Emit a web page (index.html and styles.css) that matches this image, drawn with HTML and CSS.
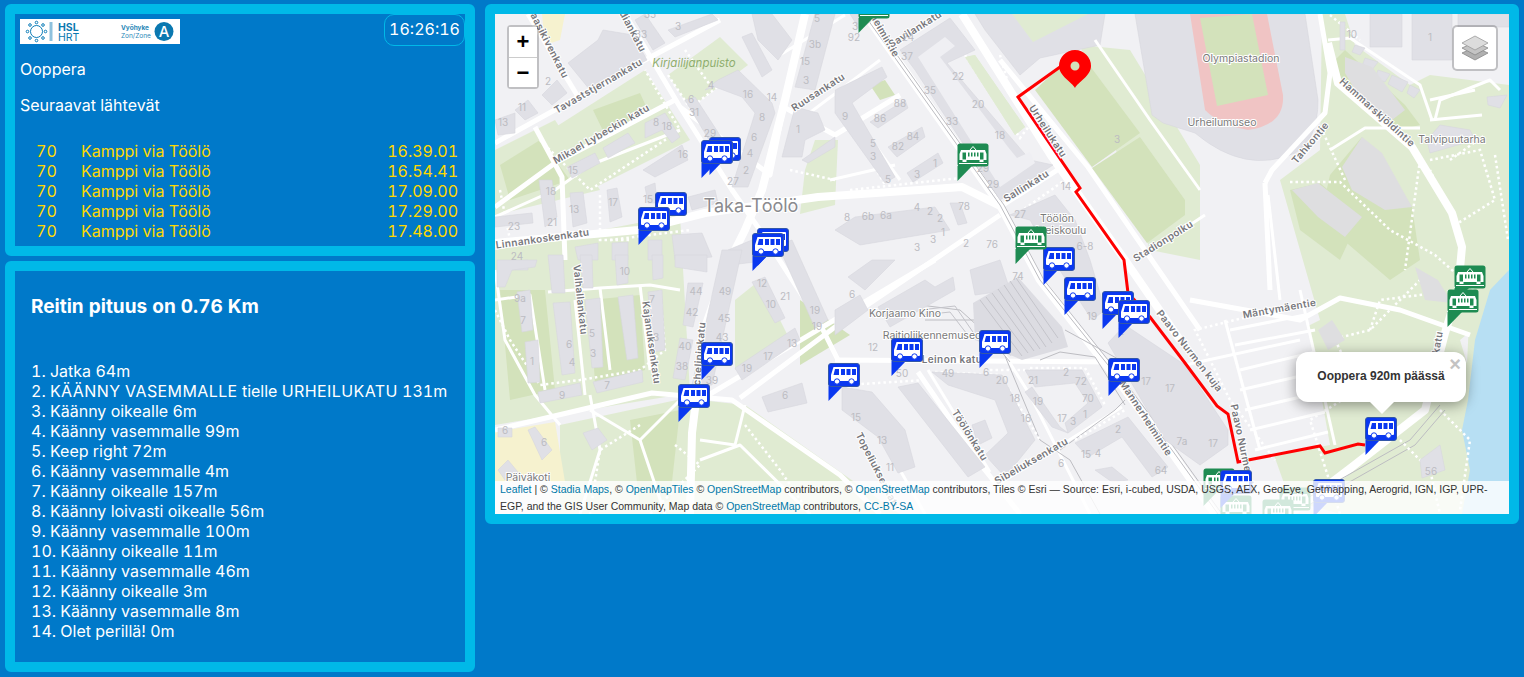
FILE: index.html
```html
<!DOCTYPE html>
<html lang="fi">
<head>
<meta charset="utf-8">
<title>Ooppera</title>
<link rel="stylesheet" href="styles.css">
</head>
<body>
<div class="page">
  <div class="left">
    <section class="panel stop">
      <div class="top">
        <svg class="logo" viewBox="0 0 160 25">
          <rect width="160" height="25" fill="#fff"/>
          <g fill="none" stroke="#0a7cb8" stroke-width="1">
            <circle cx="16.5" cy="12.5" r="6"/>
            <circle cx="16.5" cy="3.5" r="1.3"/><circle cx="16.5" cy="21.5" r="1.3"/>
            <circle cx="7.5" cy="12.5" r="1.3"/><circle cx="25.5" cy="12.5" r="1.3"/>
            <circle cx="10" cy="6" r="1.3"/><circle cx="23" cy="6" r="1.3"/>
            <circle cx="10" cy="19" r="1.3"/><circle cx="23" cy="19" r="1.3"/>
          </g>
          <rect x="29.500" y="3" width="3" height="19" fill="#8fc1dd"/>
          <text class="logo-b" x="38" y="12">HSL</text>
          <text class="logo-r" x="38" y="21.500">HRT</text>
          <text class="logo-s logo-sb" x="101" y="11">Vyöhyke</text>
          <text class="logo-s" x="101" y="18.500">Zon/Zone</text>
          <circle cx="144" cy="12.500" r="9.500" fill="#0a78b0"/>
          <text class="logo-a" x="144" y="18" text-anchor="middle">A</text>
        </svg>
        <div class="clock">16:26:16</div>
      </div>
      <p class="stop-name">Ooppera</p>
      <p class="next">Seuraavat lähtevät</p>
      <div class="deps">
        <div class="dep"><span>70</span><span>Kamppi via Töölö</span><span>16.39.01</span></div>
        <div class="dep"><span>70</span><span>Kamppi via Töölö</span><span>16.54.41</span></div>
        <div class="dep"><span>70</span><span>Kamppi via Töölö</span><span>17.09.00</span></div>
        <div class="dep"><span>70</span><span>Kamppi via Töölö</span><span>17.29.00</span></div>
        <div class="dep"><span>70</span><span>Kamppi via Töölö</span><span>17.48.00</span></div>
      </div>
    </section>
    <section class="panel route">
      <h2>Reitin pituus on 0.76 Km</h2>
      <ol class="steps">
        <li>1. Jatka 64m</li>
        <li>2. <span class="caps">KÄÄNNY VASEMMALLE</span> tielle <span class="caps">URHEILUKATU</span> 131m</li>
        <li>3. Käänny oikealle 6m</li>
        <li>4. Käänny vasemmalle 99m</li>
        <li>5. Keep right 72m</li>
        <li>6. Käänny vasemmalle 4m</li>
        <li>7. Käänny oikealle 157m</li>
        <li>8. Käänny loivasti oikealle 56m</li>
        <li>9. Käänny vasemmalle 100m</li>
        <li>10. Käänny oikealle 11m</li>
        <li>11. Käänny vasemmalle 46m</li>
        <li>12. Käänny oikealle 3m</li>
        <li>13. Käänny vasemmalle 8m</li>
        <li>14. Olet perillä! 0m</li>
      </ol>
    </section>
  </div>
  <section class="panel mapwrap">
    <div class="map">
      <svg class="tiles" viewBox="495 14 1014 500">
        <defs>
          <symbol id="bus" viewBox="0 0 32 38">
            <path class="m-blue" d="M.5 23H15L.5 38Z"/>
            <rect class="m-blue-box" x=".5" y=".5" width="31" height="23" rx="2.500"/>
            <path class="m-white" d="M5.500 4H28q1 0 1 1V17q0 1-1 1H4q-1 0-1-1V12Z"/>
            <path class="m-blue" d="M7 6h4v6H5.500ZM13 6h4v6h-4ZM18.500 6h4v6h-4ZM24 6h4v6h-4Z"/>
            <circle class="m-wheel" cx="9" cy="18.500" r="2.700"/>
            <circle class="m-wheel" cx="23.500" cy="18.500" r="2.700"/>
          </symbol>
          <symbol id="tram" viewBox="0 0 32 38">
            <path class="m-green" d="M.5 23H15L.5 38Z"/>
            <rect class="m-green" x=".5" y=".5" width="31" height="23" rx="2.500"/>
            <path class="m-line" d="M13 7 16 3.500 19 7"/>
            <path class="m-white" d="M4 7H28L29.500 11V17H26.500V19H22.500V17H9.500V19H5.500V17H2.500V11Z"/>
            <path class="m-green" d="M5.500 9.500h3.500v7H5.500ZM11 9.500h1.500v4H11ZM14 9.500h1.500v4H14ZM17 9.500h1.500v4H17ZM20 9.500h1.500v4H20ZM23 9.500h3.500v7H23Z"/>
            <rect class="m-white" x="2" y="20" width="28" height="1"/>
          </symbol>
        </defs>
        <rect class="bg" x="495" y="14" width="1014" height="500"/>

        <!-- parks -->
        <g class="park">
          <polygon points="495,250 680,215 690,393 495,425"/>
          <polygon points="495,150 555,120 600,190 495,215"/>
          <polygon points="540,137 645,70 690,140 590,190"/>
          <polygon points="668,75 720,37 748,65 690,108"/>
          <polygon points="800,214 835,205 838,140 815,140 805,170"/>
          <polygon points="560,425 700,395 700,514 560,514"/>
          <polygon points="700,400 745,405 900,514 700,514"/>
          <polygon points="735,300 760,280 790,340 735,370"/>
          <polygon points="1322,14 1509,14 1509,300 1460,340 1478,400 1460,514 1340,514 1290,500 1240,360 1320,320 1280,180 1320,150"/>
          <polygon points="1080,45 1130,50 1200,165 1200,260 1150,250"/>
          <polygon points="965,57 975,55 1025,127 1015,135"/>
          <polygon points="1012,14 1088,14 1033,42"/>
          <polygon points="1470,300 1509,270 1509,514 1460,514"/>
          <polygon points="1428,445 1465,440 1480,514 1420,514"/>
          <polygon points="542,14 565,14 560,40 545,45" class="sand"/>
          <polygon points="495,432 555,422 565,482 495,482" class="sand"/>
          <polygon points="1040,215 1060,205 1075,225 1050,235" class="sand"/>
        </g>
        <polygon class="bg" points="1345,14 1509,14 1509,85 1430,75 1410,85 1355,45"/>
        <polygon class="bg" points="1225,325 1305,305 1330,445 1240,462"/>
        <g class="park2">
          <polygon points="593,110 640,93 650,115 605,135"/>
          <polygon points="1035,90 1078,50 1140,133 1092,167"/>
          <polygon points="1092,168 1140,137 1185,200 1185,215 1147,243"/>
          <polygon points="870,85 885,80 895,95 880,100"/>
          <polygon points="1330,175 1362,137 1412,207 1420,260 1390,280 1320,220"/>
          <polygon points="1290,190 1320,183 1360,217 1340,260 1300,230"/>
          <polygon points="1335,60 1345,50 1405,105 1420,125 1400,130 1345,90"/>
          <polygon points="590,300 640,295 645,370 595,385"/>
          <polygon points="500,290 545,290 555,390 510,400"/>
          <polygon points="630,420 680,410 670,500 640,510"/>
          <polygon points="800,300 850,335 800,365"/>
          <polygon points="500,165 540,140 570,180 510,200"/>
        </g>

        <!-- water -->
        <path class="water" d="M1509 270 1490 290 1475 340 1468 400 1462 430 1470 470 1462 514H1509Z"/>

        <!-- stadium -->
        <polygon class="bld" points="975,14 1105,14 1100,45 1040,58 1020,75 985,30"/>
        <polygon class="park" points="1012,14 1088,14 1033,42"/>
        <path class="bld" d="M1135 14H1305L1318 100Q1318 140 1295 153 1245 175 1195 133L1163 123 1152 115Z"/>
        <path class="track" d="M1190 14H1267L1283 95Q1285 125 1248 130 1220 125 1205 110Z"/>
        <polygon class="park2" points="1200,18 1252,14 1268,95 1217,106"/>

        <!-- roads -->
        <g class="road r3">
          <polyline points="495,217 555,190 590,165 680,130"/>
          <polyline points="495,300 530,295 545,390"/>
          <polyline points="548,292 600,288 650,285 680,290"/>
          <polyline points="600,288 610,370"/>
          <polyline points="495,270 505,340 535,395 560,425"/>
          <polyline points="575,300 585,395"/>
          <polyline points="640,285 650,370"/>
          <polyline points="835,90 900,180"/>
          <polyline points="780,55 845,15"/>
          <polyline points="800,120 880,60"/>
          <polyline points="830,180 895,165"/>
          <polyline points="928,370 990,472"/>
          <polyline points="1005,355 1030,395 1090,514"/>
          <polyline points="1002,482 1122,407"/>
          <polyline points="838,370 900,470 925,514"/>
          <polyline points="1330,150 1365,128 1420,128"/>
          <polyline points="1435,120 1440,100 1490,80 1500,90"/>
          <polyline points="1430,120 1482,115"/>
          <polyline points="1430,100 1475,90"/>
          <polyline points="1268,195 1280,300"/>
          <polyline points="1328,40 1350,38 1420,85 1432,120"/>
          <polyline points="1185,365 1300,340"/>
          <polyline points="1230,330 1305,315"/>
          <polyline points="1235,345 1315,330"/>
          <polyline points="1240,370 1315,352"/>
          <polyline points="1240,390 1318,372"/>
          <polyline points="1245,410 1322,392"/>
          <polyline points="1250,430 1325,412"/>
          <polyline points="1255,450 1328,432"/>
          <polyline points="1225,320 1260,450"/>
          <polyline points="1300,290 1335,445"/>
          <polyline points="590,395 600,450 580,514"/>
          <polyline points="590,410 640,440 665,514"/>
          <polyline points="640,440 680,400"/>
          <polyline points="700,440 735,445 745,405"/>
          <polyline points="700,460 740,445 810,514"/>
          <polyline points="1147,253 1205,215"/>
          <polyline points="1095,40 1150,120 1200,190"/>
        </g>
        <g class="road r6">
          <polyline points="625,14 680,107 732,190 762,233 818,320 838,360"/>
          <polyline points="495,143 645,60 720,20"/>
          <polyline points="495,207 555,163 675,100"/>
          <polyline points="680,107 770,175 785,100"/>
          <polyline points="780,105 835,135 900,95"/>
          <polyline points="700,400 935,260"/>
          <polyline points="740,398 835,327 1000,215"/>
          <polyline points="528,14 580,100"/>
          <polyline points="535,127 562,177 565,260"/>
          <polyline points="495,430 652,393 732,400 840,475 880,514"/>
          <polyline points="835,360 1120,362"/>
          <polyline points="918,372 985,470 1020,514"/>
          <polyline points="1000,207 1062,167"/>
          <polyline points="1190,300 1300,320 1340,298 1400,310 1470,335"/>
          <polyline points="1320,14 1330,73 1325,113 1272,170 1265,183"/>
          <polyline points="1000,60 1088,167 1147,253 1200,330"/>
          <polyline points="1265,183 1270,290"/>
        </g>
        <g class="road r9">
          <polyline points="805,14 785,100 762,190 745,230 725,270 705,327 692,433 690,514"/>
          <polyline points="495,243 638,230 705,213 818,197 962,187 1002,207"/>
          <polyline points="865,14 1000,205 1040,280 1110,370 1170,450 1215,514"/>
          <polyline points="1328,43 1338,83 1412,147 1452,213 1462,247 1458,290 1445,333 1425,410 1352,467 1290,514"/>
          <polyline points="962,14 1052,157 1125,260 1180,340"/>
        </g>
        <g class="tracks">
          <polyline points="868,20 1000,205 1040,280 1112,370 1172,450 1218,514"/>
          <polyline points="872,20 1004,205 1044,280 1116,370 1176,450 1222,514"/>
          <polyline points="1065,330 1120,360 1150,400"/>
          <polyline points="1040,360 1060,352 1095,357 1125,405"/>
          <polyline points="1005,356 1040,440 1070,460 1100,514"/>
          <polyline points="1060,450 1115,410 1125,400"/>
          <polyline points="920,305 960,310 1010,355 1030,350"/>
          <polyline points="925,320 975,320 1010,362"/>
          <polyline points="1295,505 1410,440 1440,405"/>
          <polyline points="1300,510 1415,445 1445,410"/>
        </g>

        <!-- dotted paths -->
        <g class="dots">
          <polyline points="495,310 510,340 540,385 580,380 640,370 665,350 660,290"/>
          <polyline points="540,140 590,190 680,130 645,70"/>
          <polyline points="668,75 690,108 720,85"/>
          <polyline points="685,50 710,85"/>
          <polyline points="675,445 700,465 650,514"/>
          <polyline points="640,425 600,450 590,514"/>
          <polyline points="745,425 780,470 810,514"/>
          <polyline points="1290,182 1340,182 1390,230 1435,255 1480,295"/>
          <polyline points="1345,180 1322,130"/>
          <polyline points="1420,160 1405,270"/>
          <polyline points="1430,160 1480,150 1495,200 1455,225 1430,170"/>
          <polyline points="1450,160 1485,135"/>
          <polyline points="1495,155 1508,240"/>
          <polyline points="1330,15 1360,40"/>
          <polyline points="1255,315 1195,330 1230,400 1275,460"/>
          <polyline points="1330,340 1370,330 1420,280"/>
          <polyline points="1370,330 1380,300 1460,290"/>
          <polyline points="1350,395 1310,420 1340,514"/>
          <polyline points="1335,340 1355,380"/>
          <polyline points="1400,440 1430,470 1440,514"/>
          <polyline points="1440,410 1470,440 1460,510"/>
          <polyline points="935,372 1000,375 1040,440"/>
          <polyline points="1030,368 1085,368 1105,405"/>
          <polyline points="845,385 925,380"/>
          <polyline points="965,55 1020,138 1030,125"/>
          <polyline points="840,105 885,185"/>
          <polyline points="1020,212 1065,180"/>
          <polyline points="850,190 960,178"/>
          <polyline points="990,370 1030,370"/>
          <polyline points="1075,440 1125,410"/>
          <polyline points="500,190 510,240"/>
          <polyline points="600,195 600,240 630,240"/>
          <polyline points="610,240 690,230"/>
          <polyline points="790,170 835,180"/>
          <polyline points="1000,55 1010,90"/>
        </g>

        <!-- buildings -->
        <g class="bld">
          <polygon points="568,63 598,40 603,30 633,35 647,60 590,90"/>
          <polygon points="635,20 645,14 665,43 653,50"/>
          <polygon points="668,30 712,14 718,20 675,37"/>
          <polygon points="542,95 557,80 567,93 552,105"/>
          <polygon points="515,110 528,100 538,113 525,120"/>
          <polygon points="495,120 515,113 515,133 498,135"/>
          <polygon points="645,123 665,113 680,137 672,143 662,130 645,138"/>
          <polygon points="603,148 628,133 635,143 608,158"/>
          <polygon points="567,167 595,153 600,163 572,178"/>
          <polygon points="643,170 682,145 688,160 655,177"/>
          <polygon points="685,100 695,97 725,143 715,150"/>
          <polygon points="705,90 718,80 738,70 772,103 775,113 748,187 732,187 755,113 742,97 715,87"/>
          <polygon points="742,37 752,33 772,70 762,77"/>
          <polygon points="752,14 772,14 792,40 778,60 758,40"/>
          <polygon points="795,87 815,14 835,14 815,90"/>
          <polygon points="782,157 795,107 818,113 825,130 805,140 802,157"/>
          <polygon points="802,160 835,137 835,147 808,163"/>
          <polygon points="539,180 552,180 557,217 545,227"/>
          <polygon points="570,193 583,192 587,223 573,227"/>
          <polygon points="607,190 617,188 622,217 610,222"/>
          <polygon points="495,217 532,213 533,223 495,227"/>
          <polygon points="645,187 655,183 657,203 648,203"/>
          <polygon points="688,197 715,190 718,203 692,210"/>
          <polygon points="672,235 702,233 712,257 675,260"/>
          <polygon points="648,240 662,240 662,260 648,260"/>
          <polygon points="575,247 598,243 598,260 578,260"/>
          <polygon points="612,243 628,242 628,260 612,260"/>
          <polygon points="505,263 528,260 528,270 505,270"/>
          <polygon points="728,250 752,240 755,262 730,265"/>
          <polygon points="497,260 537,260 535,267 512,270 505,287 497,287"/>
          <polygon points="517,292 530,290 533,330 522,332"/>
          <polygon points="525,342 538,340 540,382 528,383"/>
          <polygon points="548,255 563,255 565,293 552,293"/>
          <polygon points="553,303 570,302 575,373 562,375"/>
          <polygon points="580,255 592,255 593,288 583,288"/>
          <polygon points="585,300 600,298 603,367 592,368"/>
          <polygon points="615,255 628,255 628,283 617,285"/>
          <polygon points="618,297 633,295 638,358 627,360"/>
          <polygon points="648,292 662,290 665,350 653,352"/>
          <polygon points="652,255 663,255 663,278 653,280"/>
          <polygon points="675,255 707,255 707,272 675,267"/>
          <polygon points="688,283 703,283 693,327 683,325"/>
          <polygon points="680,338 693,340 685,380 673,378"/>
          <polygon points="722,250 742,250 712,385 692,385"/>
          <polygon points="752,282 765,277 785,318 775,323"/>
          <polygon points="735,368 795,328 800,340 742,380"/>
          <polygon points="538,392 580,383 582,395 540,403"/>
          <polygon points="593,382 642,370 643,382 597,393"/>
          <polygon points="762,397 802,383 807,403 768,412"/>
          <polygon points="778,245 792,240 828,320 815,328"/>
          <polygon points="528,430 535,427 552,450 542,460"/>
          <polygon points="498,428 512,428 512,437 498,437"/>
          <polygon points="498,470 508,460 522,477 505,480"/>
          <polygon points="583,433 598,428 607,440 592,450"/>
          <polygon points="848,277 872,260 895,260 865,290"/>
          <polygon points="878,307 925,280 935,287 953,277 955,290 890,327"/>
          <polygon points="835,310 860,295 868,310 835,335"/>
          <polygon points="932,372 1002,375 1035,440 1005,477 985,455 1008,433 995,400 948,385"/>
          <polygon points="972,425 985,420 992,438 978,445"/>
          <polygon points="1025,370 1082,370 1102,407 1068,433 1065,423 1088,403 1075,383 1035,387"/>
          <polygon points="1032,387 1060,427 1068,433 1052,427 1025,392"/>
          <polygon points="842,387 872,392 905,430 915,467 898,473 878,437 842,410"/>
          <polygon points="898,387 918,383 985,467 968,477"/>
          <polygon points="1075,443 1128,417 1168,467 1152,477 1122,437 1088,457"/>
          <polygon points="1095,470 1112,467 1128,480 1112,482"/>
          <polygon points="1108,343 1125,325 1185,365 1228,430 1228,445 1200,465 1165,440"/>
          <polygon points="1010,215 1055,195 1075,220 1090,260 1105,310 1092,320 1050,255 1030,220"/>
          <polygon points="900,50 950,18 975,50 947,63 1030,160 1053,165 1000,200 915,70"/>
          <polygon points="835,90 882,67 887,77 852,103 895,177 885,183 835,113"/>
          <polygon points="870,122 905,100 908,108 878,128"/>
          <polygon points="888,147 922,127 925,137 897,157"/>
          <polygon points="907,173 938,153 943,163 913,182"/>
          <polygon points="835,230 855,217 935,207 950,230 860,245"/>
          <polygon points="950,203 960,203 967,223 958,225"/>
          <polygon points="970,270 1000,260 1010,290 975,295"/>
          <polygon points="850,14 880,14 860,30"/>
          <polygon points="1370,14 1402,14 1402,47 1370,47"/>
          <polygon points="1412,14 1452,14 1452,60 1412,60"/>
          <polygon points="1458,14 1509,14 1509,27 1458,27"/>
          <polygon points="1487,97 1507,95 1500,108 1488,105"/>
          <polygon points="1427,140 1440,125 1470,130 1475,140 1430,153"/>
          <polygon points="1355,45 1365,48 1360,55 1352,52"/>
          <polygon points="1365,58 1378,62 1372,70 1362,66"/>
          <polygon points="1378,70 1390,74 1385,82 1375,78"/>
          <polygon points="1392,75 1408,82 1402,92 1388,84"/>
          <polygon points="1410,85 1420,90 1414,98 1407,93"/>
          <polygon points="1340,22 1345,22 1345,50 1340,50"/>
          <polygon points="1420,460 1440,445 1445,470 1422,478"/>
        </g>
        <polygon class="court" points="918,57 945,37 955,46 940,57 1008,147 1017,158 1030,152 1035,163 1000,187"/>
        <polygon class="park" points="965,57 975,55 1025,127 1015,135"/>
        <polygon class="dep-roof" points="973,303 1018,277 1062,327 1068,347 1022,360 975,340"/>
        <g class="hatch">
          <line x1="980" y1="300" x2="1022" y2="356"/><line x1="986" y1="297" x2="1028" y2="353"/>
          <line x1="992" y1="293" x2="1034" y2="351"/><line x1="998" y1="289" x2="1040" y2="349"/>
          <line x1="1004" y1="285" x2="1046" y2="347"/><line x1="1010" y1="281" x2="1052" y2="343"/>
          <line x1="1016" y1="278" x2="1058" y2="338"/>
          <polyline points="920,310 955,306 975,335"/>
          <polyline points="923,315 950,312 970,338"/>
        </g>
        <g class="rock">
          <polygon points="1345,57 1372,67 1405,110 1392,120 1365,107 1345,73"/>
          <polygon points="1342,167 1362,137 1382,153 1412,207 1385,210 1352,190"/>
          <polygon points="1292,190 1318,183 1362,217 1345,237 1318,217"/>
          <polygon points="1318,330 1332,320 1345,340 1328,350"/>
          <polygon points="1415,267 1438,280 1452,303 1425,300"/>
        </g>

        <!-- route -->
        <polyline class="routeline" points="1060,67 1018,97 1080,188 1076,192 1124,260 1128,293 1150,317 1185,363 1217,406 1228,414 1238,462 1320,446 1325,453 1358,444 1365,445"/>
        <path class="pin" fill-rule="evenodd" d="M1075 88C1072 82 1059 76 1059 66A16 16 0 0 1 1091 66C1091 76 1078 82 1075 88ZM1075 61.500A4.500 4.500 0 1 0 1075 70.500 4.500 4.500 0 1 0 1075 61.500Z"/>

        <!-- labels -->
        <g class="lbl">
          <text x="545" y="44" transform="rotate(63 545 44)">Paasikivenkatu</text>
          <text x="624" y="22" transform="rotate(62 624 22)">Arkadiankatu</text>
          <text x="600" y="89" transform="rotate(-30 600 89)">Tavaststjernankatu</text>
          <text x="603" y="137" transform="rotate(-30 603 137)">Mikael Lybeckin katu</text>
          <text x="543" y="242" transform="rotate(-8 543 242)">Linnankoskenkatu</text>
          <text x="820" y="95" transform="rotate(-33 820 95)">Ruusankatu</text>
          <text x="872" y="20" transform="rotate(60 872 20)">Mannerheimintie</text>
          <text x="917" y="32" transform="rotate(-32 917 32)">Savilankatu</text>
          <text x="1028" y="189" transform="rotate(-32 1028 189)">Sallinkatu</text>
          <text x="1045" y="133" transform="rotate(57 1045 133)">Urheilukatu</text>
          <text x="1165" y="244" transform="rotate(-32 1165 244)">Stadionpolku</text>
          <text x="1313" y="145" transform="rotate(-50 1313 145)">Tahkontie</text>
          <text x="1375" y="115" transform="rotate(42 1375 115)">Hammarskjöldintie</text>
          <text x="1280" y="312" transform="rotate(-10 1280 312)">Mäntymäentie</text>
          <text x="1187" y="353" transform="rotate(52 1187 353)">Paavo Nurmen kuja</text>
          <text x="1240" y="450" transform="rotate(78 1240 450)">Paavo Nurmen tie</text>
          <text x="1441" y="343" transform="rotate(-80 1441 343)">katu</text>
          <text x="577" y="300" transform="rotate(84 577 300)">Valhallankatu</text>
          <text x="648" y="343" transform="rotate(82 648 343)">Kajanuksenkatu</text>
          <text x="702" y="362" transform="rotate(-85 702 362)">Mechelininkatu</text>
          <text x="952" y="363">Leinon katu</text>
          <text x="967" y="437" transform="rotate(58 967 437)">Töölönkatu</text>
          <text x="875" y="473" transform="rotate(63 875 473)">Topeliuksenkatu</text>
          <text x="1033" y="464" transform="rotate(-30 1033 464)">Sibeliuksenkatu</text>
          <text x="1143" y="420" transform="rotate(57 1143 420)">Mannerheimintie</text>
        </g>
        <g class="poi">
          <text x="905" y="317">Korjaamo Kino</text>
          <text x="932" y="339">Raitioliikennemuseo</text>
          <text x="1057" y="222">Töölön</text>
          <text x="1058" y="234">yhteiskoulu</text>
          <text x="1241" y="62">Olympiastadion</text>
          <text x="1222" y="126">Urheilumuseo</text>
          <text x="1452" y="143">Talvipuutarha</text>
          <text x="528" y="481">Päiväkoti</text>
        </g>
        <text class="place" x="751" y="212">Taka-Töölö</text>
        <text class="park-lbl" x="694" y="67">Kirjailijanpuisto</text>
        <g class="num">
          <text x="641" y="38">33</text><text x="650" y="18">35</text><text x="678" y="30">3</text><text x="817" y="22">5</text>
          <text x="815" y="48">3b</text><text x="805" y="65">15</text><text x="806" y="84">3</text>
          <text x="522" y="111">11</text><text x="503" y="126">13</text><text x="548" y="85">2</text>
          <text x="691" y="103">6</text><text x="694" y="116">31</text><text x="711" y="89">4</text>
          <text x="748" y="98">16</text><text x="772" y="101">14</text><text x="762" y="121">8</text>
          <text x="754" y="141">6</text><text x="750" y="157">4</text><text x="746" y="174">2</text>
          <text x="733" y="185">27</text><text x="710" y="137">29</text><text x="683" y="158">16</text>
          <text x="798" y="133">1</text><text x="648" y="203">15</text><text x="613" y="206">17</text>
          <text x="574" y="213">13</text><text x="551" y="195">18</text><text x="552" y="226">21</text>
          <text x="514" y="230">23</text><text x="517" y="260">24</text><text x="656" y="126">8</text>
          <text x="667" y="130">18</text><text x="573" y="174">15</text>
          <text x="520" y="302">9a</text><text x="523" y="324">7</text><text x="532" y="365">1</text>
          <text x="569" y="348">6</text><text x="572" y="366">4</text><text x="592" y="337">5</text><text x="593" y="357">3</text>
          <text x="625" y="275">10</text><text x="652" y="303">7</text><text x="656" y="341">3</text>
          <text x="696" y="295">44</text><text x="692" y="316">42</text><text x="685" y="350">40</text><text x="682" y="370">38</text>
          <text x="725" y="295">49</text><text x="724" y="322">45</text><text x="722" y="341">43</text><text x="712" y="384">39</text>
          <text x="762" y="287">12</text><text x="771" y="308">10</text><text x="747" y="372">19</text><text x="768" y="360">17</text><text x="792" y="347">13</text>
          <text x="785" y="300">21</text><text x="815" y="314">19</text><text x="817" y="330">19</text>
          <text x="562" y="399">9</text><text x="607" y="389">7</text><text x="785" y="399">6</text>
          <text x="505" y="434">6</text><text x="544" y="446">6</text>
          <text x="855" y="30">3</text><text x="854" y="41">92</text><text x="908" y="41">24</text><text x="907" y="60">37</text>
          <text x="958" y="80">22</text><text x="930" y="94">35</text><text x="978" y="108">20</text><text x="952" y="125">33</text>
          <text x="1000" y="139">18</text><text x="983" y="172">29</text><text x="993" y="188">29</text>
          <text x="900" y="107">88</text><text x="880" y="122">86</text><text x="913" y="140">84</text>
          <text x="898" y="150">82</text><text x="845" y="120">9</text><text x="873" y="147">5</text><text x="873" y="160">3</text>
          <text x="888" y="183">5</text><text x="935" y="167">1</text><text x="917" y="178">3</text>
          <text x="964" y="210">78</text><text x="917" y="211">4</text><text x="930" y="215">2</text><text x="847" y="221">8</text><text x="868" y="220">6b</text><text x="886" y="219">6a</text>
          <text x="940" y="222">2</text><text x="943" y="236">1</text><text x="933" y="243">3</text><text x="917" y="251">3</text><text x="966" y="247">2</text>
          <text x="992" y="248">76</text><text x="1066" y="190">14</text><text x="1020" y="218">27</text>
          <text x="1117" y="143">3</text><text x="1085" y="250">6-8</text>
          <text x="1018" y="280">74</text><text x="1092" y="320">19</text><text x="1121" y="335">2</text>
          <text x="873" y="351">12</text><text x="902" y="377">50</text><text x="948" y="377">49</text><text x="986" y="376">6</text>
          <text x="1002" y="384">20</text><text x="1015" y="402">18</text><text x="1026" y="422">16</text>
          <text x="1033" y="384">21</text><text x="1066" y="376">2</text><text x="1081" y="385">72</text><text x="1038" y="405">19</text>
          <text x="1088" y="402">70</text><text x="1062" y="422">17</text><text x="1073" y="425">3</text><text x="1085" y="418">1</text>
          <text x="856" y="421">15</text><text x="882" y="444">13</text><text x="890" y="471">11</text>
          <text x="1118" y="433">2</text><text x="1098" y="457">4</text><text x="1086" y="458">15</text><text x="1161" y="474">64</text><text x="1061" y="467">6</text>
          <text x="1146" y="385">17</text><text x="1170" y="392">17</text><text x="1213" y="447">17</text>
          <text x="1431" y="475">56</text><text x="1182" y="445">7a</text>
          <text x="1352" y="38">10</text><text x="1430" y="41">1</text>
          <text x="852" y="298">6</text>
        </g>

        <!-- markers -->
        <use href="#tram" x="858" y="-5" width="32" height="38"/>
        <use href="#bus" x="709" y="137" width="32" height="38"/>
        <use href="#bus" x="701" y="140" width="32" height="38"/>
        <use href="#bus" x="655" y="192" width="32" height="38"/>
        <use href="#bus" x="638" y="207" width="32" height="38"/>
        <use href="#bus" x="757" y="228" width="32" height="38"/>
        <use href="#bus" x="752" y="233" width="32" height="38"/>
        <use href="#tram" x="957" y="143" width="32" height="38"/>
        <use href="#bus" x="1043" y="247" width="32" height="38"/>
        <use href="#tram" x="1015" y="226" width="32" height="38"/>
        <use href="#bus" x="1064" y="277" width="32" height="38"/>
        <use href="#bus" x="1102" y="291" width="32" height="38"/>
        <use href="#bus" x="1118" y="300" width="32" height="38"/>
        <use href="#bus" x="1108" y="358" width="32" height="38"/>
        <use href="#bus" x="979" y="330" width="32" height="38"/>
        <use href="#bus" x="891" y="338" width="32" height="38"/>
        <use href="#bus" x="828" y="363" width="32" height="38"/>
        <use href="#bus" x="701" y="342" width="32" height="38"/>
        <use href="#bus" x="678" y="384" width="32" height="38"/>
        <use href="#tram" x="1454" y="265" width="32" height="38"/>
        <use href="#tram" x="1447" y="289" width="32" height="38"/>
        <use href="#tram" x="1279" y="487" width="32" height="38"/>
        <use href="#tram" x="1203" y="468" width="32" height="38"/>
        <use href="#tram" x="1220" y="495" width="32" height="38"/>
        <use href="#tram" x="1262" y="499" width="32" height="38"/>
        <use href="#bus" x="1220" y="470" width="32" height="38"/>
        <use href="#bus" x="1313" y="479" width="32" height="38"/>
        <use href="#bus" x="1365" y="417" width="32" height="38"/>
      </svg>

      <div class="zoom">
        <a class="zoom-btn">+</a>
        <a class="zoom-btn">−</a>
      </div>
      <div class="layers">
        <svg class="layers-icon" viewBox="0 0 28 26">
          <path class="ly3" d="M14 12 27 18 14 25 1 18Z"/>
          <path class="ly2" d="M14 7 27 13 14 20 1 13Z"/>
          <path class="ly1" d="M14 1 27 8 14 15 1 8Z"/>
        </svg>
      </div>
      <div class="popup">
        <span class="popup-x">×</span>
        <span class="popup-t">Ooppera 920m päässä</span>
        <i class="popup-tip"></i>
      </div>
      <div class="attr"><a>Leaflet</a> | © <a>Stadia Maps</a>, © <a>OpenMapTiles</a> © <a>OpenStreetMap</a> contributors, © <a>OpenStreetMap</a> contributors, Tiles © Esri — Source: Esri, i-cubed, USDA, USGS, AEX, GeoEye, Getmapping, Aerogrid, IGN, IGP, UPR-EGP, and the GIS User Community, Map data © <a>OpenStreetMap</a> contributors, <a>CC-BY-SA</a></div>
    </div>
  </section>
</div>
</body>
</html>
```

FILE: styles.css
```css
* { box-sizing: border-box; }
html, body { margin: 0; height: 100%; }
body {
  background: #0079c9;
  color: #fff;
  font-family: Inter, "Noto Sans", sans-serif;
  font-size: 16px;
  font-feature-settings: "tnum";
  overflow: hidden;
}
.page {
  display: flex;
  gap: 10px;
  align-items: flex-start;
  padding: 4px 5px 5px;
}
.left {
  width: 470px;
  flex: none;
  display: flex;
  flex-direction: column;
  gap: 5px;
}
.panel {
  border: 10px solid #00b9e8;
  border-radius: 6px;
  background: #0079c9;
}
.stop { height: 252px; padding: 5px 0 0 5px; }
.top { display: flex; justify-content: space-between; align-items: flex-start; }
.logo { width: 160px; height: 25px; display: block; }
.logo-b { font: 700 10.5px Inter, sans-serif; fill: #0a78b0; }
.logo-r { font: 400 10.5px Inter, sans-serif; fill: #0a78b0; }
.logo-s { font: 400 6.5px Inter, sans-serif; fill: #2a88b8; }
.logo-sb { font-weight: 700; }
.logo-a { font: 500 15px Inter, sans-serif; fill: #fff; }
.clock {
  width: 81px;
  height: 32px;
  margin-top: -5px;
  border: 1px solid #00b9e8;
  border-radius: 10px;
  text-align: center;
  line-height: 29px;
  font-size: 16px;
}
.stop-name { margin: 13px 0 0; line-height: 20px; }
.next { margin: 16px 0 0; line-height: 20px; }
.deps { margin-top: 26px; padding: 0 7px 0 16px; color: #ffd800; }
.dep {
  display: grid;
  grid-template-columns: 45px 1fr auto;
  line-height: 20px;
}
.route { height: 411px; padding: 26px 10px 0 16px; }
.route h2 { margin: 0; font-size: 19px; line-height: 20px; font-weight: 700; }
.steps { list-style: none; margin: 44px 0 0; padding: 0; }
.steps li { line-height: 20px; white-space: nowrap; }
.caps { letter-spacing: .4px; }

.mapwrap { flex: none; width: 1034px; height: 520px; }
.map { position: relative; width: 1014px; height: 500px; overflow: hidden; background: #f1f1f4; }
.tiles { display: block; width: 1014px; height: 500px; }
.bg { fill: #f1f1f4; }
.park polygon, polygon.park { fill: #e0ebd2; }
.park polygon.sand { fill: #f6f2cf; }
.park2 polygon, polygon.park2 { fill: #d3e2bb; }
.water { fill: #b7dff3; }
.bld polygon, .bld, polygon.bld { fill: #e0e0e6; stroke: #d6d6dd; stroke-width: .6; }
.track { fill: #f0c4c4; }
.court { fill: #efeff3; }
.dep-roof { fill: #dcdce2; }
.rock polygon { fill: #dedee0; }
.hatch line, .hatch polyline { stroke: #c4c4ca; stroke-width: 1; fill: none; }
.road polyline { fill: none; stroke: #fff; stroke-linejoin: round; }
.r3 polyline { stroke-width: 3; }
.r6 polyline { stroke-width: 5; }
.r9 polyline { stroke-width: 8; }
.tracks polyline { fill: none; stroke: #bdbdc2; stroke-width: 1; }
.dots polyline { fill: none; stroke: #fff; stroke-width: 2.5; stroke-dasharray: 2.5 3; }
.routeline { fill: none; stroke: #f00; stroke-width: 3; stroke-linejoin: miter; }
.pin { fill: #f00; }
.lbl text {
  font: 600 10px Inter, sans-serif;
  letter-spacing: .4px;
  fill: #77777c;
  text-anchor: middle;
  paint-order: stroke;
  stroke: #fff;
  stroke-width: 2px;
}
.poi text {
  font: 400 10.5px Inter, sans-serif;
  fill: #7a7a7a;
  text-anchor: middle;
  paint-order: stroke;
  stroke: #fff;
  stroke-width: 2px;
}
.place { font: 400 18px Inter, sans-serif; fill: #8a8a8e; text-anchor: middle; paint-order: stroke; stroke: #fff; stroke-width: 2px; }
.park-lbl { font: italic 400 11.5px Inter, sans-serif; fill: #8fae6e; text-anchor: middle; }
.num text { font: 400 10px Inter, sans-serif; fill: #bcbcc2; text-anchor: middle; }
.m-blue { fill: #0a38f0; }
.m-blue-box { fill: #0a38f0; stroke: #3458a8; stroke-width: 1; }
.m-green { fill: #1e8b52; }
.m-white { fill: #fff; }
.m-wheel { fill: #fff; stroke: #0a38f0; stroke-width: 1; }
.m-line { fill: none; stroke: #fff; stroke-width: 1; }

.zoom {
  position: absolute;
  left: 12px;
  top: 11px;
  width: 32px;
  border: 2px solid rgba(0, 0, 0, .2);
  border-radius: 4px;
  background-clip: padding-box;
}
.zoom-btn {
  display: block;
  height: 30px;
  background: #fff;
  color: #000;
  text-align: center;
  font: 700 22px/30px "Liberation Sans", sans-serif;
}
.zoom-btn + .zoom-btn { border-top: 1px solid #ccc; }
.layers {
  position: absolute;
  right: 11px;
  top: 11px;
  width: 46px;
  height: 46px;
  background: #fff;
  border: 2px solid rgba(0, 0, 0, .2);
  border-radius: 5px;
  background-clip: padding-box;
  display: flex;
  align-items: center;
  justify-content: center;
}
.layers-icon { width: 28px; height: 26px; }
.ly1 { fill: #dcdcdc; stroke: #9a9a9a; stroke-width: .8; }
.ly2 { fill: #c4c4c4; stroke: #888; stroke-width: .8; }
.ly3 { fill: #b0b0b0; stroke: #888; stroke-width: .8; }
.popup {
  position: absolute;
  left: 801px;
  top: 338px;
  width: 170px;
  height: 50px;
  background: #fff;
  border-radius: 12px;
  box-shadow: 0 3px 14px rgba(0, 0, 0, .4);
  display: flex;
  align-items: center;
  justify-content: center;
  font: 700 12px "Liberation Sans", sans-serif;
  color: #333;
}
.popup-t { position: relative; top: -1px; }
.popup-tip {
  position: absolute;
  left: 73px;
  top: 49px;
  width: 0;
  height: 0;
  border-left: 13px solid transparent;
  border-right: 13px solid transparent;
  border-top: 13px solid #fff;
}
.popup-x {
  position: absolute;
  right: 5px;
  top: 2px;
  font: 700 20px/20px "Liberation Sans", sans-serif;
  color: #c3c3c3;
}
.attr {
  position: absolute;
  left: 0;
  right: 0;
  bottom: 0;
  padding: 0 5px;
  background: rgba(255, 255, 255, .8);
  color: #333;
  font: 10.5px/16.5px "Liberation Sans", sans-serif;
}
.attr a { color: #0078a8; }
```
